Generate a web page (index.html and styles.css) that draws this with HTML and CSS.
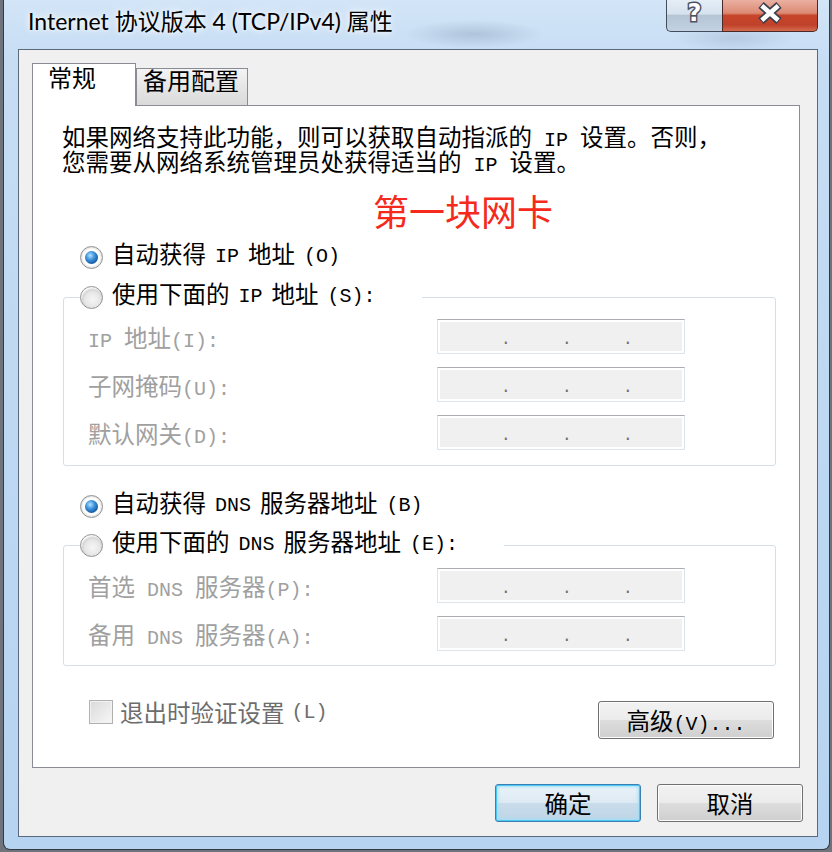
FILE: index.html
```html
<!DOCTYPE html>
<html lang="zh-CN">
<head>
    <meta charset="UTF-8">
    <title>Internet 协议版本 4 (TCP/IPv4) 属性</title>
    <link rel="stylesheet" href="styles.css">
</head>
<body>
    <div class="window">
        <!-- Title bar -->
        <div class="titlebar">
            <span class="title">Internet 协议版本 4 (TCP/IPv4) 属性</span>
            <div class="caption">
                <span class="cap-btn help">?</span>
                <span class="cap-btn close">
                    <svg width="26" height="22" viewBox="0 0 26 22">
                        <path d="M4 3 L22 19 M22 3 L4 19" stroke="#3b3f4c" stroke-width="8" fill="none"/>
                        <path d="M4.8 3.7 L21.2 18.3 M21.2 3.7 L4.8 18.3" stroke="#fff" stroke-width="4.5" fill="none"/>
                    </svg>
                </span>
            </div>
        </div>

        <div class="client">
            <!-- Tabs -->
            <div class="tabs">
                <span class="tab active">常规</span>
                <span class="tab">备用配置</span>
            </div>

            <div class="panel">
                <p class="intro">如果网络支持此功能，则可以获取自动指派的<span class="en"> IP </span>设置。否则，<br>您需要从网络系统管理员处获得适当的<span class="en"> IP </span>设置。</p>
                <div class="note">第一块网卡</div>

                <!-- IP address -->
                <label class="option first"><span class="radio on"></span>自动获得<span class="en"> IP </span>地址<span class="en">(O)</span></label>
                <fieldset class="group group-ip">
                    <legend><span class="option"><span class="radio"></span>使用下面的<span class="en"> IP </span>地址<span class="en">(S):</span></span></legend>
                    <div class="field first"><span class="field-label"><span class="en">IP </span>地址<span class="en">(I):</span></span><span class="ip"><span class="dot">.</span><span class="dot">.</span><span class="dot">.</span></span></div>
                    <div class="field"><span class="field-label">子网掩码<span class="en">(U):</span></span><span class="ip"><span class="dot">.</span><span class="dot">.</span><span class="dot">.</span></span></div>
                    <div class="field"><span class="field-label">默认网关<span class="en">(D):</span></span><span class="ip"><span class="dot">.</span><span class="dot">.</span><span class="dot">.</span></span></div>
                </fieldset>

                <!-- DNS -->
                <label class="option second"><span class="radio on"></span>自动获得<span class="en"> DNS </span>服务器地址<span class="en">(B)</span></label>
                <fieldset class="group group-dns">
                    <legend><span class="option"><span class="radio"></span>使用下面的<span class="en"> DNS </span>服务器地址<span class="en">(E):</span></span></legend>
                    <div class="field first"><span class="field-label">首选<span class="en"> DNS </span>服务器<span class="en">(P):</span></span><span class="ip"><span class="dot">.</span><span class="dot">.</span><span class="dot">.</span></span></div>
                    <div class="field"><span class="field-label">备用<span class="en"> DNS </span>服务器<span class="en">(A):</span></span><span class="ip"><span class="dot">.</span><span class="dot">.</span><span class="dot">.</span></span></div>
                </fieldset>

                <div class="panel-foot">
                    <label class="check"><span class="box"></span>退出时验证设置<span class="en">(L)</span></label>
                    <button type="button" class="btn advanced">高级<span class="en">(V)...</span></button>
                </div>
            </div>

            <!-- OK / Cancel -->
            <div class="dialog-buttons">
                <button type="button" class="btn default">确定</button>
                <button type="button" class="btn">取消</button>
            </div>
        </div>
    </div>
</body>
</html>
```

FILE: styles.css
```css
body {
    margin: 0;
    background-color: #6f747c;
    font-family: "Liberation Mono", "Noto Sans CJK SC", monospace;
    color: #000;
}

/* Window frame */
.window {
    margin-left: 3px;
    width: 827px;
    height: 850px;
    box-sizing: border-box;
    border: 1px solid #343a42;
    border-top: none;
    border-radius: 0 0 7px 7px;
    padding: 0 11px 12px 14px;
    background:
        radial-gradient(ellipse 70px 14px at 470px 34px, rgba(90, 110, 140, 0.25), transparent),
        radial-gradient(ellipse 60px 14px at 730px 38px, rgba(90, 110, 140, 0.18), transparent),
        linear-gradient(#d3e5f7 0, #c6ddf4 60px, #bcd7f2 60%, #b6d3f1 100%);
}
.titlebar {
    height: 49px;
    display: flex;
    justify-content: space-between;
    align-items: flex-start;
}
.title {
    font-family: "Lato", "Noto Sans CJK SC", sans-serif;
    font-size: 23px;
    line-height: 30px;
    padding: 6px 0 0 10px;
    text-shadow: 0 0 8px #fff, 0 0 4px rgba(255, 255, 255, 0.8);
}
.caption {
    display: flex;
}
.cap-btn {
    height: 32px;
    box-sizing: border-box;
    display: flex;
    align-items: center;
    justify-content: center;
    border: 1px solid #434c5a;
    border-top: none;
}
.help {
    width: 56px;
    align-items: flex-start;
    border-right: none;
    border-radius: 0 0 0 5px;
    background: linear-gradient(#e5edf6 0, #d6e2ee 45%, #b6c5d5 50%, #c3d2e2 100%);
    font-family: "DejaVu Sans", sans-serif;
    font-weight: bold;
    font-size: 24px;
    line-height: 24px;
    padding-top: 1px;
    color: #fff;
    -webkit-text-stroke: 3px #4a5262;
    paint-order: stroke fill;
}
.close {
    width: 96px;
    border-radius: 0 0 5px 0;
    border-color: #4a2a26;
    background: linear-gradient(#eab0a1 0, #dc8a74 42%, #c7462b 50%, #c0412a 80%, #d56b4f 100%);
    padding-bottom: 6px;
}

/* Client area */
.client {
    height: 788px;
    box-sizing: border-box;
    border: 1px solid #5b697a;
    background-color: #f0f0f0;
    padding: 13px 0 0 13px;
}
.en {
    font-family: "Liberation Mono", monospace;
    font-size: 20px;
}

/* Tabs */
.tabs {
    display: flex;
    align-items: flex-end;
    height: 43px;
    margin-bottom: -1px;
    position: relative;
    z-index: 1;
}
.tab {
    box-sizing: border-box;
    height: 38px;
    width: 112px;
    border: 1px solid #898c95;
    padding: 3px 0 0 6px;
    font-size: 24px;
    line-height: 24px;
    background: linear-gradient(#f4f4f4, #e6e6e6 50%, #dadada);
}
.tab.active {
    height: 43px;
    width: 104px;
    border-bottom: none;
    padding: 5px 0 0 15px;
    background: #fff;
}

.panel {
    width: 768px;
    height: 663px;
    box-sizing: border-box;
    border: 1px solid #898c95;
    background-color: #fff;
    font-size: 23.5px;
}
.intro {
    margin: 22px 0 0 29px;
    line-height: 24px;
}
.note {
    margin: 12px 0 0 340px;
    font-family: "Noto Sans CJK SC", sans-serif;
    font-size: 36px;
    line-height: 40px;
    color: #f52a1c;
}

/* Radio options */
.option {
    display: flex;
    align-items: center;
    gap: 9px;
    height: 30px;
    line-height: 30px;
}
.option.first {
    margin: 12px 0 0 47px;
}
.option.second {
    margin: 25px 0 0 47px;
}
.radio {
    flex: none;
    position: relative;
    width: 23px;
    height: 23px;
    box-sizing: border-box;
    border-radius: 50%;
    border: 1px solid #939393;
    background: radial-gradient(circle at 55% 60%, #f6f6f6 0, #e6e6e6 45%, #d6d6d6 58%, #fafafa 70%);
}
.radio.on {
    background: radial-gradient(circle, #fff 0, #fff 55%, #e2e2e2 70%, #f8f8f8 80%);
}
.radio.on::after {
    content: "";
    position: absolute;
    left: 4px;
    top: 4px;
    width: 13px;
    height: 13px;
    border-radius: 50%;
    background: radial-gradient(circle at 40% 35%, #b3e3fd 0, #3d93dc 38%, #1a5fa6 70%, #173a62 100%);
}

/* Group boxes */
.group {
    margin: 10px 0 0 30px;
    padding: 0 0 15px 0;
    width: 713px;
    box-sizing: border-box;
    border: 1px solid #d5dfe5;
    border-radius: 3px;
    min-inline-size: auto;
}
.group legend {
    margin-left: 16px;
    padding: 0;
    height: 30px;
}
.group-ip legend {
    width: 342px;
}
.group-dns {
    margin-top: 9px;
    padding-bottom: 14px;
}
.group-dns legend {
    width: 424px;
}
.field {
    display: flex;
    align-items: center;
    height: 35px;
    padding-left: 24px;
    margin-top: 13px;
    color: #a0a0a0;
}
.group-ip .field.first {
    margin-top: 7px;
}
.group-dns .field.first {
    margin-top: 8px;
}
.field-label {
    width: 349px;
}
.ip {
    display: flex;
    align-items: flex-start;
    width: 248px;
    height: 35px;
    box-sizing: border-box;
    border: 1px solid #dde4ec;
    border-top-color: #abadb3;
    background-color: #f0f0f0;
    box-shadow: inset 0 0 0 2px #fff;
    padding: 12px 0 0 63px;
}
.ip .dot {
    width: 62px;
    font-family: "Liberation Mono", monospace;
    font-size: 16px;
    line-height: 16px;
    color: #6e6e6e;
}

/* Bottom of the tab page */
.panel-foot {
    display: flex;
    justify-content: space-between;
    align-items: flex-start;
    margin-top: 35px;
    padding: 0 25px 0 56px;
}
.check {
    display: flex;
    align-items: center;
    gap: 7px;
    height: 26px;
    margin-top: -2px;
    color: #6d6d6d;
}
.box {
    width: 24px;
    height: 24px;
    box-sizing: border-box;
    border: 1px solid #b0b0b0;
    background: linear-gradient(135deg, #dadada, #f7f7f7);
    box-shadow: inset 0 0 0 1px #f2f2f2;
}

/* Buttons */
.btn {
    height: 38px;
    padding: 0;
    font-family: "Liberation Mono", "Noto Sans CJK SC", monospace;
    font-size: 23.5px;
    color: #000;
    border: 1px solid #707070;
    border-radius: 3px;
    background: linear-gradient(#f2f2f2, #ebebeb 50%, #dddddd 51%, #cfcfcf);
    box-shadow: inset 0 0 0 1px #fcfcfc;
}
.advanced {
    width: 176px;
}
.dialog-buttons {
    display: flex;
    justify-content: flex-end;
    gap: 16px;
    margin-top: 16px;
    padding-right: 14px;
}
.dialog-buttons .btn {
    width: 146px;
}
.btn.default {
    border-color: #3c7fb1;
    background: linear-gradient(#eaf3f9, #dde9f2 50%, #c9dceb 51%, #bed5e6);
    box-shadow: inset 0 0 0 1px #4cc6f4, inset 0 0 3px 2px #9fe0f8;
}
```
